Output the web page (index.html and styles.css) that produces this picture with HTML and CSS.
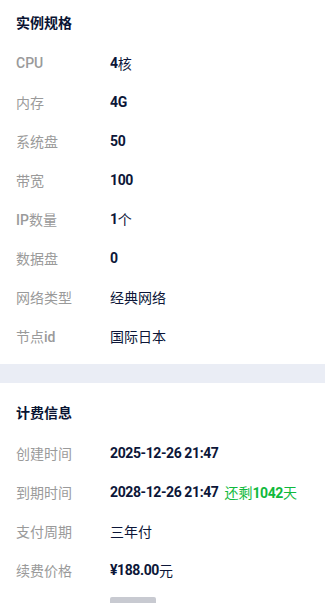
FILE: index.html
```html
<!DOCTYPE html>
<html lang="zh">
<head>
<meta charset="utf-8">
<link rel="stylesheet" href="styles.css">
</head>
<body>
<div class="page">
  <section class="section first">
    <div class="title">实例规格</div>
    <div class="row"><span class="label">CPU</span><span class="value">4<span class="cj">核</span></span></div>
    <div class="row"><span class="label"><span class="cj">内存</span></span><span class="value">4G</span></div>
    <div class="row"><span class="label"><span class="cj">系统盘</span></span><span class="value">50</span></div>
    <div class="row"><span class="label"><span class="cj">带宽</span></span><span class="value">100</span></div>
    <div class="row"><span class="label">IP<span class="cj">数量</span></span><span class="value">1<span class="cj">个</span></span></div>
    <div class="row"><span class="label"><span class="cj">数据盘</span></span><span class="value">0</span></div>
    <div class="row"><span class="label"><span class="cj">网络类型</span></span><span class="value"><span class="cj">经典网络</span></span></div>
    <div class="row"><span class="label"><span class="cj">节点</span>id</span><span class="value"><span class="cj">国际日本</span></span></div>
  </section>
  <div class="band"></div>
  <section class="section second">
    <div class="title">计费信息</div>
    <div class="row"><span class="label"><span class="cj">创建时间</span></span><span class="value">2025-12-26 21:47</span></div>
    <div class="row"><span class="label"><span class="cj">到期时间</span></span><span class="value">2028-12-26 21:47<span class="remain"><span class="cj">还剩</span>1042<span class="cj">天</span></span></span></div>
    <div class="row"><span class="label"><span class="cj">支付周期</span></span><span class="value"><span class="cj">三年付</span></span></div>
    <div class="row"><span class="label"><span class="cj">续费价格</span></span><span class="value">¥188.00<span class="cj">元</span></span></div>
    <div class="actions"><span class="btn"></span></div>
  </section>
</div>
</body>
</html>
```

FILE: styles.css
```css
* { box-sizing: border-box; }
html, body { margin: 0; padding: 0; background: #fff; }
body {
  font-family: Roboto, "Noto Sans CJK SC", sans-serif;
  font-size: 14px;
  color: #0c1638;
  overflow: hidden;
}
.page { width: 325px; }
.section { padding: 0 16px; }
.section.first { padding-top: 4px; padding-bottom: 9px; }
.section.second { padding-top: 11px; }
.title {
  height: 39px;
  line-height: 39px;
  font-weight: bold;
  font-size: 14px;
  color: #0a1433;
}
.row {
  display: flex;
  align-items: center;
  height: 39px;
}
.label {
  width: 94px;
  flex: none;
  color: #9a9a9a;
  font-weight: 500;
}
.value {
  font-weight: bold;
  color: #0c1638;
  display: flex;
  align-items: center;
  letter-spacing: -0.4px;
}
.cj { font-weight: normal; letter-spacing: 0; }
.remain {
  margin-left: 6px;
  color: #10b93c;
}
.band {
  height: 19px;
  background: #eaedf5;
}
.actions {
  padding-left: 94px;
  padding-top: 8px;
}
.btn {
  display: block;
  width: 46px;
  height: 14px;
  background: #c8cad1;
  border-radius: 2px;
}
```
